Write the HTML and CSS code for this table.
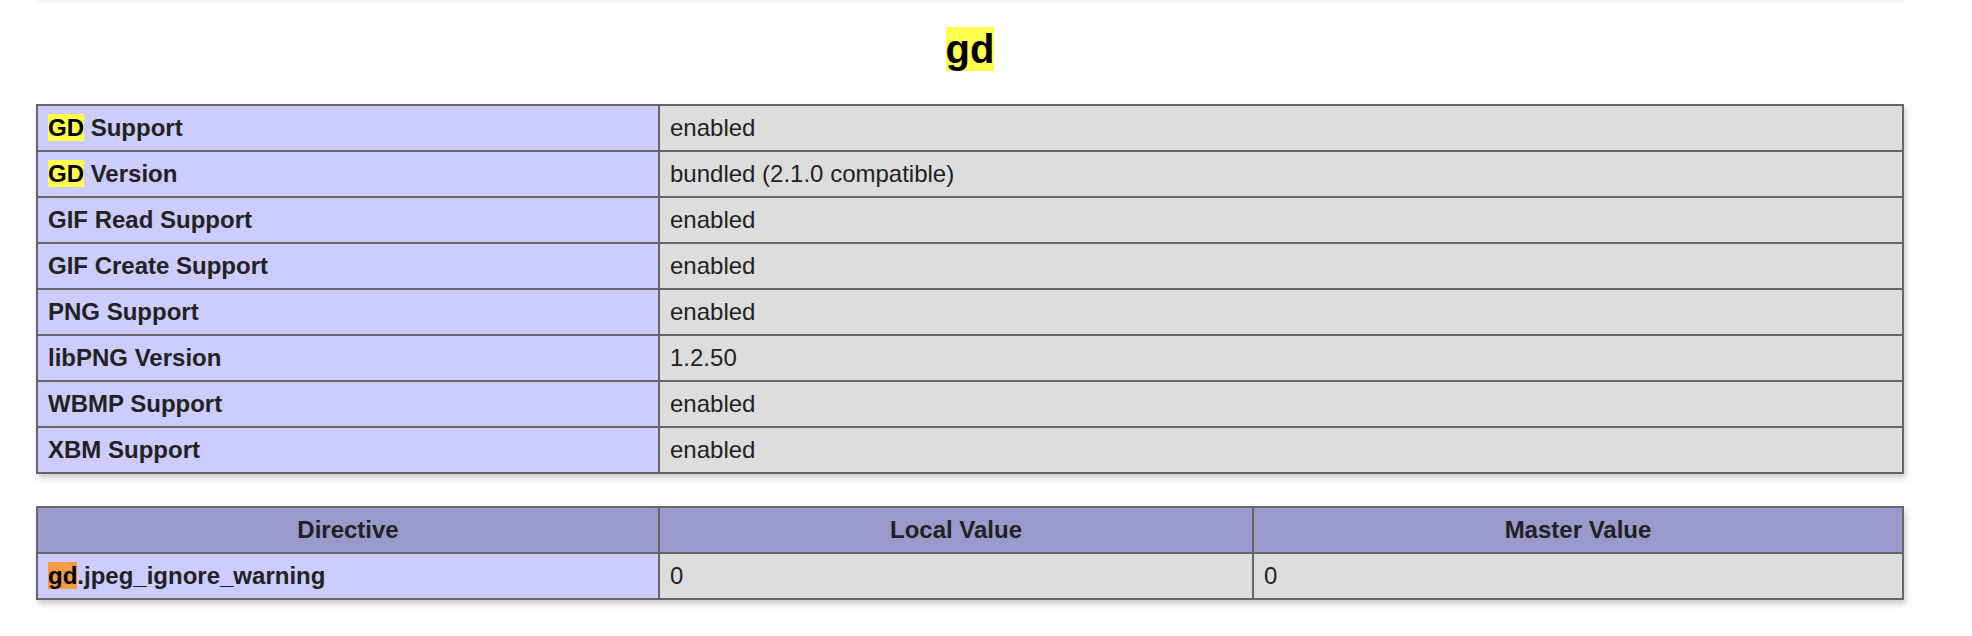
FILE: index.html
```html
<!DOCTYPE html>
<html>
<head>
<meta charset="utf-8">
<title>phpinfo - gd</title>
<link rel="stylesheet" href="styles.css">
</head>
<body>
<div class="center">
  <div class="prev"></div>
  <h2><span class="hl">gd</span></h2>
  <table>
    <tr><td class="e"><span class="hl">GD</span> Support</td><td class="v">enabled</td></tr>
    <tr><td class="e"><span class="hl">GD</span> Version</td><td class="v">bundled (2.1.0 compatible)</td></tr>
    <tr><td class="e">GIF Read Support</td><td class="v">enabled</td></tr>
    <tr><td class="e">GIF Create Support</td><td class="v">enabled</td></tr>
    <tr><td class="e">PNG Support</td><td class="v">enabled</td></tr>
    <tr><td class="e">libPNG Version</td><td class="v">1.2.50</td></tr>
    <tr><td class="e">WBMP Support</td><td class="v">enabled</td></tr>
    <tr><td class="e">XBM Support</td><td class="v">enabled</td></tr>
  </table>
  <table>
    <tr class="h"><th>Directive</th><th>Local Value</th><th>Master Value</th></tr>
    <tr><td class="e"><span class="hl-cur">gd</span>.jpeg_ignore_warning</td><td class="v">0</td><td class="v">0</td></tr>
  </table>
</div>
</body>
</html>
```
FILE: styles.css
```css
html, body {
  margin: 0;
  padding: 0;
  background: #fff;
}
body {
  color: #222;
  font-family: "Liberation Sans", Arial, Helvetica, sans-serif;
}
.center {
  width: 1868px;
  margin-left: 36px;
  text-align: center;
}
.prev {
  height: 10px;
  margin-top: -10px;
  box-shadow: 1px 1px 4px #f0f0f0;
  background: #fff;
}
h2 {
  font-size: 40px;
  line-height: 46px;
  font-weight: bold;
  margin: 26px 0 32px;
}
.hl {
  background: #ffff4d;
  color: #000;
}
.hl-cur {
  background: #f59a45;
  color: #000;
}
table {
  border-collapse: collapse;
  border: 0;
  width: 1868px;
  box-shadow: 2px 4px 6px #ccc;
  text-align: left;
  margin: 0 0 32px;
}
td, th {
  border: 2px solid #666;
  font-size: 24px;
  line-height: 28px;
  vertical-align: baseline;
  padding: 8px 10px;
}
th {
  text-align: center;
}
.e {
  background-color: #ccf;
  width: 600px;
  font-weight: bold;
}
.h {
  background-color: #99c;
  font-weight: bold;
}
.v {
  background-color: #ddd;
}
.h th:nth-child(2) {
  width: 572px;
}
```
